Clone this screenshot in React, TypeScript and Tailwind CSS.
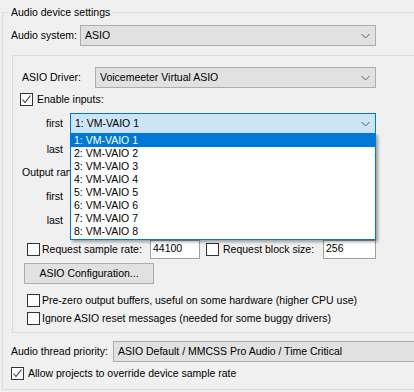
import React from "react";

function Chevron() {
  return (
    <svg width="9" height="5" viewBox="0 0 9 5" className="absolute right-[5px] top-1/2 -translate-y-1/2">
      <polyline points="0.5,0.5 4.5,4.5 8.5,0.5" fill="none" stroke="#606060" strokeWidth="1" />
    </svg>
  );
}

function Select({ w, text, focused }: { w: string; text: string; focused?: boolean }) {
  return (
    <div
      className={
        "relative h-[21px] flex items-center pl-[4px] shrink-0 border " +
        w +
        " " +
        (focused ? "bg-[#cce4f7] border-[#0078d7]" : "bg-[#e1e1e1] border-[#adadad]")
      }
    >
      <span className="whitespace-nowrap">{text}</span>
      <Chevron />
    </div>
  );
}

function Check({ checked }: { checked?: boolean }) {
  return (
    <div className="w-[13px] h-[13px] border border-[#333333] bg-white shrink-0 relative">
      {checked && (
        <svg width="11" height="11" viewBox="0 0 11 11" className="absolute left-0 top-0">
          <polyline points="1.5,5.5 4,8.5 9.5,1.5" fill="none" stroke="#333333" strokeWidth="1.1" />
        </svg>
      )}
    </div>
  );
}

export default function App() {
  const items = ["1: VM-VAIO 1", "2: VM-VAIO 2", "3: VM-VAIO 3", "4: VM-VAIO 4", "5: VM-VAIO 5", "6: VM-VAIO 6", "7: VM-VAIO 7", "8: VM-VAIO 8"];
  return (
    <div className="relative w-[414px] h-[392px] overflow-hidden bg-[#f0f0f0] text-black font-['Liberation_Sans',Arial,sans-serif] text-[10.5px] leading-[13px] pt-[12px] pl-[2px]">
      <div className="relative w-[440px] border border-[#dcdcdc] pb-[9px]">
        <div className="absolute left-[6px] top-[-8px] px-[2px] bg-[#f0f0f0] leading-[14px]">Audio device settings</div>

        <div className="mt-[12px] flex items-center h-[21px]">
          <div className="w-[77px] pl-[8px] whitespace-nowrap">Audio system:</div>
          <Select w="w-[296px]" text="ASIO" />
        </div>

        <div className="mt-[9px] ml-[9px] border border-[#dcdcdc] pb-[7px] flex flex-col">
          <div className="mt-[11px] flex items-center h-[21px]">
            <div className="w-[82px] pl-[9px] whitespace-nowrap">ASIO Driver:</div>
            <Select w="w-[281px]" text="Voicemeeter Virtual ASIO" />
          </div>

          <div className="mt-[5px] ml-[7px] flex items-center h-[13px] gap-[4px]">
            <Check checked />
            <span>Enable inputs:</span>
          </div>

          <div className="mt-[7px] flex items-center h-[21px]">
            <div className="w-[57px] pr-[7px] text-right">first</div>
            <Select w="w-[306px]" text="1: VM-VAIO 1" focused />
          </div>
          <div className="mt-[5px] flex items-center h-[21px]">
            <div className="w-[57px] pr-[7px] text-right">last</div>
            <Select w="w-[306px]" text="" />
          </div>

          <div className="mt-[6px] pl-[9px] h-[13px] flex items-center whitespace-nowrap">Output ran</div>

          <div className="mt-[7px] flex items-center h-[21px]">
            <div className="w-[57px] pr-[7px] text-right">first</div>
            <Select w="w-[306px]" text="" />
          </div>
          <div className="mt-[3px] flex items-center h-[21px]">
            <div className="w-[57px] pr-[7px] text-right">last</div>
            <Select w="w-[306px]" text="" />
          </div>

          <div className="mt-[9px] ml-[14px] flex items-center h-[19px]">
            <Check />
            <span className="ml-[2px] w-[108px] whitespace-nowrap">Request sample rate:</span>
            <div className="w-[50px] h-[19px] bg-white border border-[#a0a0a0] pl-[2px] leading-[14px] shrink-0">44100</div>
            <div className="ml-[6px]">
              <Check />
            </div>
            <span className="ml-[4px] w-[100px] whitespace-nowrap">Request block size:</span>
            <div className="w-[53px] h-[19px] bg-white border border-[#a0a0a0] pl-[2px] leading-[14px] shrink-0">256</div>
          </div>

          <div className="mt-[4px] ml-[11px] w-[130px] h-[21px] bg-[#e1e1e1] border border-[#adadad] flex items-center justify-center">
            ASIO Configuration...
          </div>

          <div className="mt-[10px] ml-[14px] flex items-center h-[13px] gap-[2px]">
            <Check />
            <span className="whitespace-nowrap">Pre-zero output buffers, useful on some hardware (higher CPU use)</span>
          </div>
          <div className="mt-[5px] ml-[14px] flex items-center h-[13px] gap-[2px]">
            <Check />
            <span className="whitespace-nowrap">Ignore ASIO reset messages (needed for some buggy drivers)</span>
          </div>
        </div>

        <div className="mt-[8px] flex items-center h-[21px]">
          <div className="w-[110px] pl-[8px] whitespace-nowrap">Audio thread priority:</div>
          <Select w="w-[320px]" text="ASIO Default / MMCSS Pro Audio / Time Critical" />
        </div>

        <div className="mt-[5px] ml-[8px] flex items-center h-[13px] gap-[4px]">
          <Check checked />
          <span className="whitespace-nowrap">Allow projects to override device sample rate</span>
        </div>
      </div>

      <div className="absolute left-[70px] top-[133px] w-[306px] h-[107px] bg-white border border-[#0078d7] shadow-[2px_2px_3px_rgba(0,0,0,0.35)] flex flex-col">
        {items.map((t, i) => (
          <div
            key={t}
            className={"h-[13px] leading-[13px] pl-[3px] whitespace-nowrap " + (i === 0 ? "bg-[#0078d7] text-white" : "")}
          >
            {t}
          </div>
        ))}
      </div>
    </div>
  );
}
